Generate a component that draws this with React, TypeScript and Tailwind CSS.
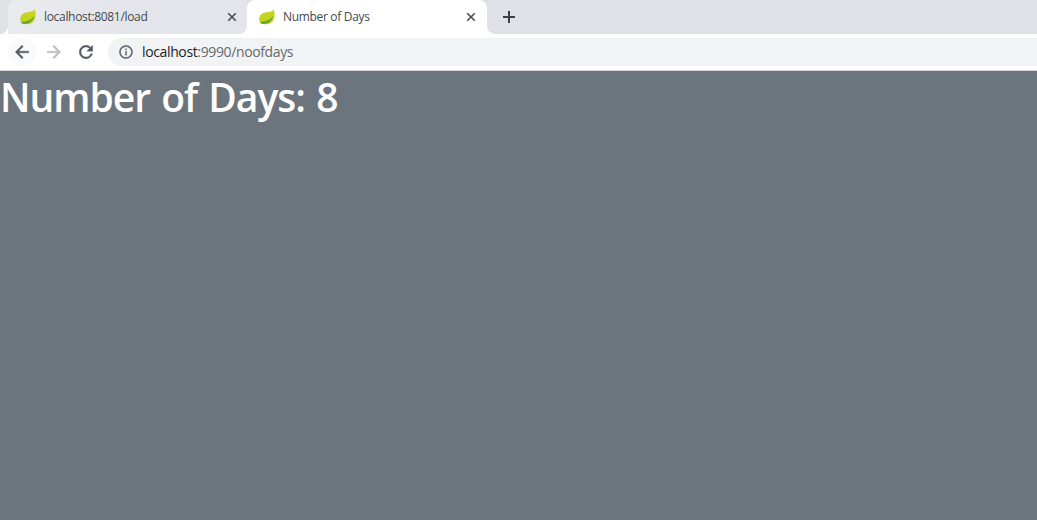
import React from "react";

function Leaf() {
  return (
    <svg width="18" height="18" viewBox="0 0 18 18" className="shrink-0">
      <path d="M15.6 1.2C14.6 3.1 12.9 3.5 9.8 4C5 4.7 1.2 6.6 1.2 11C1.2 13 2 14.8 3.2 15.6C6 16.6 10.5 16.8 13.2 14.8C16.8 12 17.6 6 15.6 1.2Z" fill="#c4d421" />
      <path d="M2.4 13.8C7 13.7 11.8 12.5 15.2 8C14.8 11 12.5 14 9.5 15.2C7 16.2 4.3 16.2 2.4 15.3Z" fill="#6aa52d" />
    </svg>
  );
}

type IconProps = { d: string; className: string; weight?: number };

function Icon({ d, className, weight = 0 }: IconProps) {
  return (
    <svg viewBox="0 0 24 24" className={className} fill="currentColor" stroke="currentColor" strokeWidth={weight}>
      <path d={d} />
    </svg>
  );
}

const ICONS = {
  back: "M20 11H7.83l5.59-5.59L12 4l-8 8 8 8 1.41-1.41L7.83 13H20v-2z",
  forward: "M12 4l-1.41 1.41L16.17 11H4v2h12.17l-5.58 5.59L12 20l8-8z",
  refresh:
    "M17.65 6.35A7.958 7.958 0 0 0 12 4c-4.42 0-7.99 3.58-7.99 8s3.57 8 7.99 8c3.73 0 6.84-2.55 7.73-6h-2.08A5.99 5.99 0 0 1 12 18c-3.31 0-6-2.69-6-6s2.69-6 6-6c1.66 0 3.14.69 4.22 1.78L13 11h7V4l-2.35 2.35z",
  info: "M11 7h2v2h-2zm0 4h2v6h-2zm1-9C6.48 2 2 6.48 2 12s4.48 10 10 10 10-4.48 10-10S17.52 2 12 2zm0 18c-4.41 0-8-3.59-8-8s3.59-8 8-8 8 3.59 8 8-3.59 8-8 8z",
  close:
    "M19 6.41L17.59 5 12 10.59 6.41 5 5 6.41 10.59 12 5 17.59 6.41 19 12 13.41 17.59 19 19 17.59 13.41 12z",
};

function Tab({ title, active = false }: { title: string; active?: boolean }) {
  return (
    <div
      className={
        active
          ? "flex h-[34px] w-60 items-center rounded-t-lg bg-white pl-[11px] pr-[9px]"
          : "flex h-[34px] w-[239px] items-center rounded-tl-lg rounded-br-lg bg-linear-to-r from-[#e9ebee] to-[#e4e5ea] to-50% pl-[11px] pr-2"
      }
    >
      <Leaf />
      <span className="ml-[7px] text-[12px] leading-4 tracking-[-0.32px] text-[#45494d]">{title}</span>
      <Icon d={ICONS.close} weight={0.8} className="ml-auto size-[14px] text-[#45494d]" />
    </div>
  );
}

export default function App() {
  return (
    <div className="flex h-[520px] w-full flex-col overflow-hidden bg-[#6c757d] font-['Open_Sans','Noto_Sans',sans-serif]">
      <div className="flex h-[34px] shrink-0 bg-white">
        <div className="w-2 rounded-br-lg bg-[#dee1e6]" />
        <div className="flex bg-[#dee1e6]">
          <div className="bg-linear-to-b from-[#dee1e6] from-50% to-white to-50%">
            <Tab title="localhost:8081/load" />
          </div>
          <Tab title="Number of Days" active />
        </div>
        <div className="flex-1 bg-linear-to-b from-[#dee1e6] from-50% to-white to-50%">
          <div className="flex h-full items-center rounded-bl-lg bg-[#dee1e6] pl-4">
            <svg width="12" height="12" viewBox="0 0 12 12" className="text-[#3c4043]">
              <path d="M6 0V12M0 6H12" stroke="currentColor" strokeWidth="2" />
            </svg>
          </div>
        </div>
      </div>
      <div className="flex h-[37px] shrink-0 items-center border-b border-[#d5d7da] bg-white pl-2">
        <div className="flex size-7 items-center justify-center rounded-full bg-[#fafafa]">
          <Icon d={ICONS.back} weight={0.5} className="size-5 text-[#54585d]" />
        </div>
        <Icon d={ICONS.forward} weight={0.5} className="ml-2 size-5 text-[#babcbe]" />
        <Icon d={ICONS.refresh} weight={0.5} className="ml-3 size-5 text-[#54585d]" />
        <div className="ml-3 flex h-7 flex-1 items-center rounded-l-full bg-[#f1f3f4] pl-[10px]">
          <Icon d={ICONS.info} weight={0.3} className="size-4 text-[#5f6368]" />
          <span className="ml-2 text-[14px] leading-5 tracking-[-0.37px] text-[#666a6e]">
            <span className="text-[#202124]">localhost</span>:9990/noofdays
          </span>
        </div>
      </div>
      <h1 className="pt-[2px] text-[39px] leading-12 font-semibold tracking-[-1px] whitespace-nowrap text-white [word-spacing:2px]">
        Number of Days: 8
      </h1>
    </div>
  );
}
